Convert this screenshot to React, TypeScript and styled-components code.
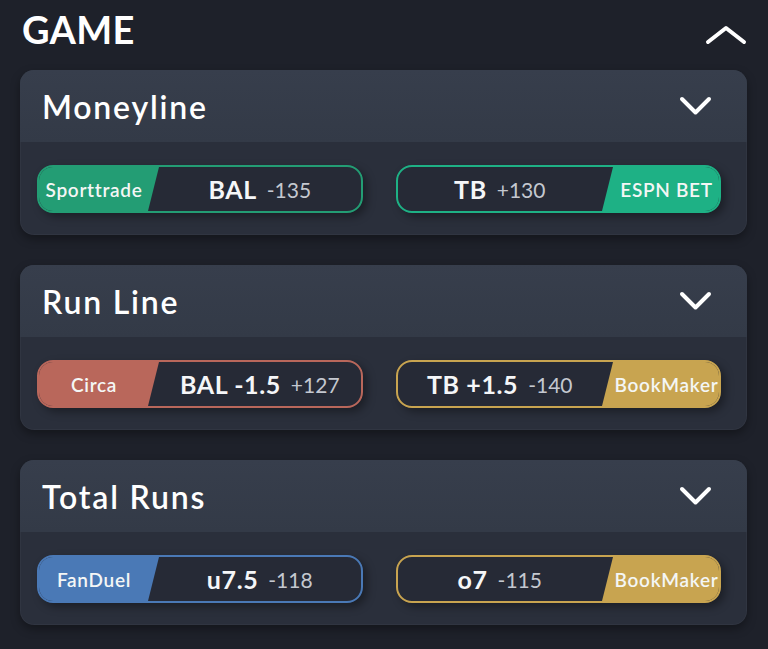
import React from "react";
import styled, { createGlobalStyle } from "styled-components";

const Global = createGlobalStyle`
  html, body { margin: 0; padding: 0; background: #1e212a; }
  body { font-family: Lato, "Open Sans", sans-serif; color: #fff; }
`;

const Page = styled.div`
  width: 768px;
  height: 649px;
  box-sizing: border-box;
  padding: 0 21px 0 20px;
  background: #1e212a;
  overflow: hidden;
`;

const TitleRow = styled.div`
  height: 70px;
  display: flex;
  align-items: flex-start;
  justify-content: space-between;
`;

const Title = styled.h1`
  margin: 7px 0 0 2px;
  font-size: 38px;
  line-height: 44px;
  font-weight: 700;
  letter-spacing: 0.3px;
`;

const UpIcon = styled.svg`
  margin-top: 25px;
  margin-right: 0;
`;

const Cards = styled.div`
  display: flex;
  flex-direction: column;
  gap: 30px;
`;

const Card = styled.section`
  border-radius: 14px;
  overflow: hidden;
  background: #2a2f3b;
  box-shadow: 0 4px 10px rgba(0, 0, 0, 0.35), inset 0 0 0 1px rgba(255,255,255,0.03);
`;

const CardHeader = styled.div`
  height: 72px;
  display: flex;
  align-items: center;
  justify-content: space-between;
  padding: 0 35px 0 22px;
  background: linear-gradient(180deg, #373e4c 0%, #333a47 100%);
`;

const CardTitle = styled.h2`
  margin: 0;
  font-size: 32px;
  font-weight: 600;
  letter-spacing: 1.8px;
  padding-top: 1px;
`;

const CardBody = styled.div`
  display: flex;
  gap: 33px;
  padding: 23px 26px 22px 17px;
`;

const Btn = styled.div<{ $c: string }>`
  flex: 1;
  height: 48px;
  box-sizing: border-box;
  border: 2px solid ${(p) => p.$c};
  border-radius: 16px;
  background: #262a36;
  display: flex;
  align-items: stretch;
  overflow: hidden;
  box-shadow: 4px 4px 8px rgba(0, 0, 0, 0.35);
`;

const Badge = styled.div<{ $c: string; $side: "left" | "right" }>`
  width: ${(p) => (p.$side === "left" ? "120px" : "117px")};
  flex: none;
  box-sizing: border-box;
  background: ${(p) => p.$c};
  display: flex;
  align-items: center;
  justify-content: center;
  font-size: 19px;
  font-weight: 600;
  letter-spacing: 0.7px;
  color: #f4f6f5;
  clip-path: ${(p) =>
    p.$side === "left"
      ? "polygon(0 0, 100% 0, calc(100% - 11px) 100%, 0 100%)"
      : "polygon(11px 0, 100% 0, 100% 100%, 0 100%)"};
  padding: ${(p) => (p.$side === "left" ? "0 12px 0 2px" : "0 0 0 12px")};
`;

const Main = styled.div`
  flex: 1;
  display: flex;
  align-items: center;
  justify-content: center;
  gap: 10px;
`;

const Pick = styled.span`
  font-size: 25px;
  font-weight: 700;
  letter-spacing: 0.6px;
  color: #f5f6f8;
`;

const Odds = styled.span`
  font-size: 21px;
  font-weight: 400;
  color: #c4c8d0;
`;

const Down = () => (
  <svg width="33" height="21" viewBox="0 0 33 21">
    <path d="M3 3 L16.5 16.5 L30 3" fill="none" stroke="#fff" strokeWidth="4" strokeLinecap="round" strokeLinejoin="round" />
  </svg>
);

type Side = { book: string; color: string; pick: string; odds: string };
type Market = { title: string; left: Side; right: Side };

const markets: Market[] = [
  {
    title: "Moneyline",
    left: { book: "Sporttrade", color: "#239d74", pick: "BAL", odds: "-135" },
    right: { book: "ESPN BET", color: "#1eb185", pick: "TB", odds: "+130" },
  },
  {
    title: "Run Line",
    left: { book: "Circa", color: "#b9675b", pick: "BAL -1.5", odds: "+127" },
    right: { book: "BookMaker", color: "#c8a450", pick: "TB +1.5", odds: "-140" },
  },
  {
    title: "Total Runs",
    left: { book: "FanDuel", color: "#4a79b6", pick: "u7.5", odds: "-118" },
    right: { book: "BookMaker", color: "#c8a450", pick: "o7", odds: "-115" },
  },
];

export default function App() {
  return (
    <Page>
      <Global />
      <TitleRow>
        <Title>GAME</Title>
        <UpIcon width="42" height="20" viewBox="0 0 42 20">
          <path d="M3 17 L21 3 L39 17" fill="none" stroke="#fff" strokeWidth="4" strokeLinecap="round" strokeLinejoin="round" />
        </UpIcon>
      </TitleRow>
      <Cards>
        {markets.map((m) => (
          <Card key={m.title}>
            <CardHeader>
              <CardTitle>{m.title}</CardTitle>
              <Down />
            </CardHeader>
            <CardBody>
              <Btn $c={m.left.color}>
                <Badge $c={m.left.color} $side="left">{m.left.book}</Badge>
                <Main>
                  <Pick>{m.left.pick}</Pick>
                  <Odds>{m.left.odds}</Odds>
                </Main>
              </Btn>
              <Btn $c={m.right.color}>
                <Main>
                  <Pick>{m.right.pick}</Pick>
                  <Odds>{m.right.odds}</Odds>
                </Main>
                <Badge $c={m.right.color} $side="right">{m.right.book}</Badge>
              </Btn>
            </CardBody>
          </Card>
        ))}
      </Cards>
    </Page>
  );
}
